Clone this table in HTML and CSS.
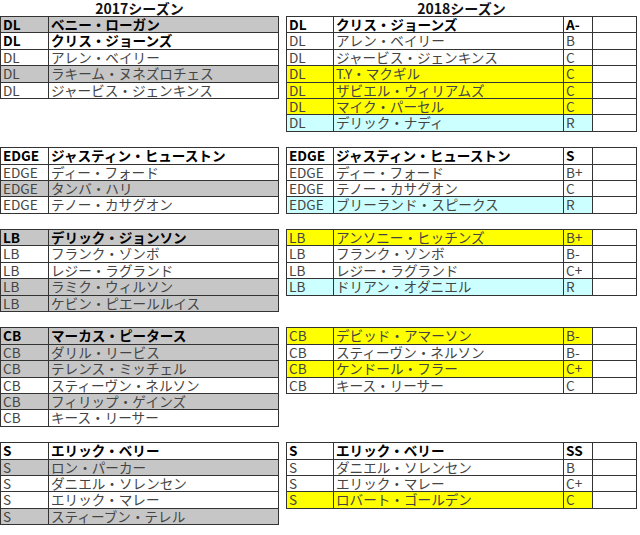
FILE: index.html
```html
<!DOCTYPE html>
<html lang="ja">
<head>
<meta charset="utf-8">
<title>2017 / 2018 シーズン</title>
<link rel="stylesheet" href="styles.css">
</head>
<body>
<div class="sheet">
  <div class="band titles">
    <div class="title w-left">2017シーズン</div>
    <div class="title w-right">2018シーズン</div>
  </div>

  <div class="band">
    <div class="tbl t-left">
      <div class="row gray b"><div class="c">DL</div><div class="c">ベニー・ローガン</div></div>
      <div class="row b"><div class="c">DL</div><div class="c">クリス・ジョーンズ</div></div>
      <div class="row"><div class="c">DL</div><div class="c">アレン・ベイリー</div></div>
      <div class="row gray"><div class="c">DL</div><div class="c">ラキーム・ヌネズロチェス</div></div>
      <div class="row"><div class="c">DL</div><div class="c">ジャービス・ジェンキンス</div></div>
    </div>
    <div class="tbl t-right">
      <div class="row b"><div class="c">DL</div><div class="c">クリス・ジョーンズ</div><div class="c">A-</div><div class="c"></div></div>
      <div class="row"><div class="c">DL</div><div class="c">アレン・ベイリー</div><div class="c">B</div><div class="c"></div></div>
      <div class="row"><div class="c">DL</div><div class="c">ジャービス・ジェンキンス</div><div class="c">C</div><div class="c"></div></div>
      <div class="row yellow"><div class="c">DL</div><div class="c">T.Y・マクギル</div><div class="c">C</div><div class="c"></div></div>
      <div class="row yellow"><div class="c">DL</div><div class="c">ザビエル・ウィリアムズ</div><div class="c">C</div><div class="c"></div></div>
      <div class="row yellow"><div class="c">DL</div><div class="c">マイク・パーセル</div><div class="c">C</div><div class="c"></div></div>
      <div class="row cyan"><div class="c">DL</div><div class="c">デリック・ナディ</div><div class="c">R</div><div class="c"></div></div>
    </div>
  </div>

  <div class="band">
    <div class="tbl t-left">
      <div class="row b"><div class="c">EDGE</div><div class="c">ジャスティン・ヒューストン</div></div>
      <div class="row"><div class="c">EDGE</div><div class="c">ディー・フォード</div></div>
      <div class="row gray"><div class="c">EDGE</div><div class="c">タンバ・ハリ</div></div>
      <div class="row"><div class="c">EDGE</div><div class="c">テノー・カサグオン</div></div>
    </div>
    <div class="tbl t-right">
      <div class="row b"><div class="c">EDGE</div><div class="c">ジャスティン・ヒューストン</div><div class="c">S</div><div class="c"></div></div>
      <div class="row"><div class="c">EDGE</div><div class="c">ディー・フォード</div><div class="c">B+</div><div class="c"></div></div>
      <div class="row"><div class="c">EDGE</div><div class="c">テノー・カサグオン</div><div class="c">C</div><div class="c"></div></div>
      <div class="row cyan"><div class="c">EDGE</div><div class="c">ブリーランド・スピークス</div><div class="c">R</div><div class="c"></div></div>
    </div>
  </div>

  <div class="band">
    <div class="tbl t-left">
      <div class="row gray b"><div class="c">LB</div><div class="c">デリック・ジョンソン</div></div>
      <div class="row"><div class="c">LB</div><div class="c">フランク・ゾンボ</div></div>
      <div class="row"><div class="c">LB</div><div class="c">レジー・ラグランド</div></div>
      <div class="row gray"><div class="c">LB</div><div class="c">ラミク・ウィルソン</div></div>
      <div class="row gray"><div class="c">LB</div><div class="c">ケビン・ピエールルイス</div></div>
    </div>
    <div class="tbl t-right">
      <div class="row yellow"><div class="c">LB</div><div class="c">アンソニー・ヒッチンズ</div><div class="c">B+</div><div class="c"></div></div>
      <div class="row"><div class="c">LB</div><div class="c">フランク・ゾンボ</div><div class="c">B-</div><div class="c"></div></div>
      <div class="row"><div class="c">LB</div><div class="c">レジー・ラグランド</div><div class="c">C+</div><div class="c"></div></div>
      <div class="row cyan"><div class="c">LB</div><div class="c">ドリアン・オダニエル</div><div class="c">R</div><div class="c"></div></div>
    </div>
  </div>

  <div class="band">
    <div class="tbl t-left">
      <div class="row gray b"><div class="c">CB</div><div class="c">マーカス・ピータース</div></div>
      <div class="row gray"><div class="c">CB</div><div class="c">ダリル・リービス</div></div>
      <div class="row gray"><div class="c">CB</div><div class="c">テレンス・ミッチェル</div></div>
      <div class="row"><div class="c">CB</div><div class="c">スティーヴン・ネルソン</div></div>
      <div class="row gray"><div class="c">CB</div><div class="c">フィリップ・ゲインズ</div></div>
      <div class="row"><div class="c">CB</div><div class="c">キース・リーサー</div></div>
    </div>
    <div class="tbl t-right">
      <div class="row yellow"><div class="c">CB</div><div class="c">デビッド・アマーソン</div><div class="c">B-</div><div class="c"></div></div>
      <div class="row"><div class="c">CB</div><div class="c">スティーヴン・ネルソン</div><div class="c">B-</div><div class="c"></div></div>
      <div class="row yellow"><div class="c">CB</div><div class="c">ケンドール・フラー</div><div class="c">C+</div><div class="c"></div></div>
      <div class="row"><div class="c">CB</div><div class="c">キース・リーサー</div><div class="c">C</div><div class="c"></div></div>
    </div>
  </div>

  <div class="band">
    <div class="tbl t-left">
      <div class="row b"><div class="c">S</div><div class="c">エリック・ベリー</div></div>
      <div class="row gray"><div class="c">S</div><div class="c">ロン・パーカー</div></div>
      <div class="row"><div class="c">S</div><div class="c">ダニエル・ソレンセン</div></div>
      <div class="row"><div class="c">S</div><div class="c">エリック・マレー</div></div>
      <div class="row gray"><div class="c">S</div><div class="c">スティーブン・テレル</div></div>
    </div>
    <div class="tbl t-right">
      <div class="row b"><div class="c">S</div><div class="c">エリック・ベリー</div><div class="c">SS</div><div class="c"></div></div>
      <div class="row"><div class="c">S</div><div class="c">ダニエル・ソレンセン</div><div class="c">B</div><div class="c"></div></div>
      <div class="row"><div class="c">S</div><div class="c">エリック・マレー</div><div class="c">C+</div><div class="c"></div></div>
      <div class="row yellow"><div class="c">S</div><div class="c">ロバート・ゴールデン</div><div class="c">C</div><div class="c"></div></div>
    </div>
  </div>
</div>
</body>
</html>
```

FILE: styles.css
```css
html, body {
  margin: 0;
  padding: 0;
  background: #ffffff;
}

.sheet {
  width: 640px;
  font-family: "Noto Sans CJK JP", "Noto Sans", sans-serif;
  font-size: 13.6px;
  color: #444444;
}

.band {
  display: flex;
  align-items: flex-start;
  gap: 7px;
  margin-bottom: 15.4px;
}

.band.titles {
  height: 16px;
  margin-bottom: 0;
}

.title {
  font-size: 14px;
  font-weight: bold;
  color: #111111;
  text-align: center;
  line-height: 16px;
  height: 16px;
}

.w-left { width: 279px; }
.w-right { width: 351px; }

.tbl {
  box-sizing: border-box;
  border: 1px solid #333333;
  border-top: none;
}

.t-left { width: 279px; }
.t-right { width: 351px; }

.row {
  display: grid;
  box-sizing: border-box;
  height: 16.4px;
  border-top: 1px solid #333333;
  background: #ffffff;
}

.t-left .row { grid-template-columns: 47px 1fr; }
.t-right .row { grid-template-columns: 46px 230px 29px 44px; }

.c {
  box-sizing: border-box;
  padding-left: 2px;
  line-height: 15.4px;
  white-space: nowrap;
}

.c + .c {
  border-left: 1px solid #333333;
}

.row.b .c {
  font-weight: bold;
  color: #000000;
}

.row.gray { background: #c6c6c6; }
.row.yellow { background: #ffff00; }
.row.cyan { background: #ccffff; }

.t-right .row .c:last-child { background: #ffffff; }
```
